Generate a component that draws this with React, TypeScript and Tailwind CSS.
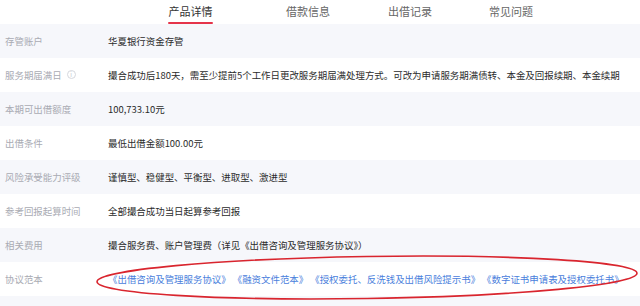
import type { ReactNode } from "react";

const rows: { label: string; value: ReactNode; info?: boolean }[] = [
  { label: "存管账户", value: "华夏银行资金存管" },
  {
    label: "服务期届满日",
    info: true,
    value:
      "撮合成功后180天，需至少提前5个工作日更改服务期届满处理方式。可改为申请服务期满债转、本金及回报续期、本金续期",
  },
  { label: "本期可出借额度", value: "100,733.10元" },
  { label: "出借条件", value: "最低出借金额100.00元" },
  { label: "风险承受能力评级", value: "谨慎型、稳健型、平衡型、进取型、激进型" },
  { label: "参考回报起算时间", value: "全部撮合成功当日起算参考回报" },
  { label: "相关费用", value: "撮合服务费、账户管理费（详见《出借咨询及管理服务协议》）" },
];

const docs = [
  "《出借咨询及管理服务协议》",
  "《融资文件范本》",
  "《授权委托、反洗钱及出借风险提示书》",
  "《数字证书申请表及授权委托书》",
];

function Row({ label, children, gray, info }: { label: string; children: ReactNode; gray: boolean; info?: boolean }) {
  return (
    <div className={`flex items-center h-[34px] ${gray ? "bg-[#f6f7fb]" : "bg-white"}`}>
      <div className="w-[108px] pl-[5px] flex items-center text-[#a9abb3]">
        {label}
        {info && (
          <span className="ml-[5px] w-[9px] h-[9px] rounded-full border border-[#d6d8de] text-[6px] leading-[7px] text-center text-[#c4c6cc]">
            i
          </span>
        )}
      </div>
      <div className="flex-1 text-[#2b2b2b] whitespace-nowrap">{children}</div>
    </div>
  );
}

export default function App() {
  return (
    <div
      className="w-[640px] h-[306px] bg-[#f6f7fb] overflow-hidden text-[9.45px] relative"
      style={{ fontFamily: '"Noto Sans CJK SC", "Noto Sans", sans-serif' }}
    >
      <div className="h-[24px] bg-white flex items-start text-[11px] text-[#666]">
        <div className="ml-[168px] flex flex-col items-center">
          <span className="leading-[22px] text-[#333]">产品详情</span>
          <span className="w-[45px] h-[2px] bg-[#e5344a] rounded-full" />
        </div>
        <span className="ml-[73px] leading-[22px]">借款信息</span>
        <span className="ml-[58px] leading-[22px]">出借记录</span>
        <span className="ml-[57px] leading-[22px]">常见问题</span>
      </div>

      {rows.map((r, i) => (
        <Row key={r.label} label={r.label} gray={i % 2 === 0} info={r.info}>
          {r.value}
        </Row>
      ))}

      <Row label="协议范本" gray={false}>
        <div className="flex gap-[2px] text-[#4a80dc]">
          {docs.map((d) => (
            <span key={d}>{d}</span>
          ))}
        </div>
      </Row>

      <svg
        className="absolute left-0 top-0 pointer-events-none"
        width="640"
        height="306"
        viewBox="0 0 640 306"
      >
        <ellipse
          cx="367"
          cy="277.5"
          rx="270"
          ry="21"
          fill="none"
          stroke="#d9252e"
          strokeWidth="1.6"
          transform="rotate(-0.9 367 277.5)"
        />
      </svg>
    </div>
  );
}
